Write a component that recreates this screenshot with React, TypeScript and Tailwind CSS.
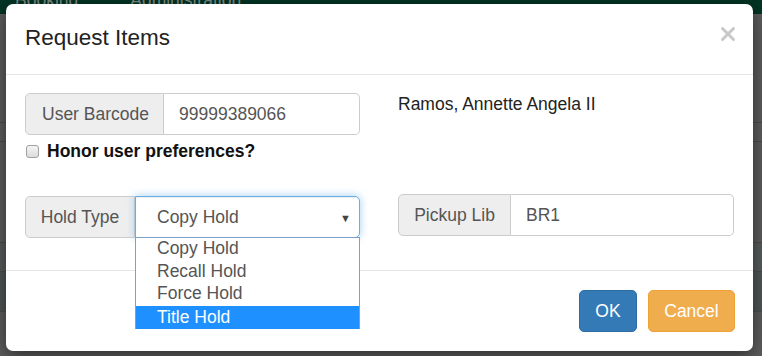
import { X } from 'lucide-react'

const font = { fontFamily: '"Liberation Sans", Arial, sans-serif' }

const holdTypes = ['Copy Hold', 'Recall Hold', 'Force Hold', 'Title Hold']

export default function App() {
  return (
    <div className="relative w-[762px] h-[356px] overflow-hidden bg-[#5d5d5d]" style={font}>
      {/* page behind the backdrop */}
      <div className="h-[27px] bg-[#023424] flex items-start gap-[52px] pl-[15px] text-[17.5px] text-[#7f8c86] -mt-[13px]">
        <span>Booking</span>
        <span>Administration</span>
      </div>
      <div className="h-[108px]" />
      <div className="h-[20px] border-y border-[#4c4c4c]" />
      <div className="h-[100px]" />
      <div className="h-[30px] border-y border-[#4c4c4c] bg-[#565b5b]" />
      <div className="h-[40px] border-b border-[#4c4c4c] bg-[#4f5656]" />

      {/* modal */}
      <div className="absolute left-[6px] top-[4px] w-[747px] h-[347px] bg-white rounded-[7px] shadow-[0_5px_18px_rgba(0,0,0,0.5)] flex flex-col text-[17.5px] text-[#333]">
        <div className="h-[71px] border-b border-[#e5e5e5] flex items-center justify-between pl-[19px] pr-[14px] shrink-0">
          <h4 className="text-[22.5px] leading-[32px] text-[#222] -mt-[2px]">Request Items</h4>
          <X className="w-[22px] h-[22px] text-[#c8c8c8] -mt-[11px]" strokeWidth={3.2} />
        </div>

        <div className="h-[196px] border-b border-[#e5e5e5] shrink-0 flex px-[19px] pt-[18px] gap-[38px]">
          {/* left column */}
          <div className="w-[335px] flex flex-col">
            <div className="flex h-[42px]">
              <span className="w-[139px] flex items-center justify-center pl-[2px] bg-[#eee] border border-[#ccc] rounded-l-[5px] text-[#555]">
                User Barcode
              </span>
              <span className="flex-1 flex items-center pl-[15px] border border-l-0 border-[#ccc] rounded-r-[5px] text-[#555]">
                99999389066
              </span>
            </div>
            <label className="flex items-center gap-[8px] mt-[5px] h-[22px] pl-[1px]">
              <span className="w-[13px] h-[13px] rounded-[3px] border border-[#a0a0a0] bg-gradient-to-b from-[#f4f4f4] to-[#dcdcdc]" />
              <span className="font-bold text-[#111]">Honor user preferences?</span>
            </label>
            <div className="relative flex h-[42px] mt-[34px]">
              <span className="w-[110px] flex items-center justify-center bg-[#eee] border border-[#ccc] rounded-l-[5px] text-[#555]">
                Hold Type
              </span>
              <span className="flex-1 flex items-center justify-between pl-[21px] pr-[8px] border border-[#66afe9] rounded-r-[5px] text-[#555] shadow-[inset_0_1px_1px_rgba(0,0,0,0.075),0_0_8px_rgba(102,175,233,0.6)]">
                Copy Hold
                <span className="text-[11px] text-[#444] mt-[2px]">▼</span>
              </span>
              <ul className="absolute left-[110px] top-[41px] w-[225px] bg-white border border-[#7f9fcf] border-b-0 text-[#555]">
                {holdTypes.map((h, i) => (
                  <li
                    key={h}
                    className={
                      i === 3
                        ? 'h-[23px] leading-[22px] pl-[21px] bg-[#1e90ff] text-white'
                        : 'h-[22.5px] leading-[20px] pl-[21px]'
                    }
                  >
                    {h}
                  </li>
                ))}
              </ul>
            </div>
          </div>

          {/* right column */}
          <div className="w-[336px] flex flex-col">
            <div className="h-[22px] leading-[22px] text-[#222]">Ramos, Annette Angela II</div>
            <div className="flex h-[42px] mt-[79px]">
              <span className="w-[113px] flex items-center justify-center bg-[#eee] border border-[#ccc] rounded-l-[5px] text-[#555]">
                Pickup Lib
              </span>
              <span className="flex-1 flex items-center pl-[15px] border border-l-0 border-[#ccc] rounded-r-[5px] text-[#555]">
                BR1
              </span>
            </div>
          </div>
        </div>

        <div className="flex-1 flex items-start justify-end gap-[11px] pt-[19px] pr-[18px]">
          <button className="h-[42px] w-[58px] rounded-[5px] bg-[#337ab7] border border-[#2e6da4] text-white">OK</button>
          <button className="h-[42px] w-[87px] rounded-[5px] bg-[#f0ad4e] border border-[#eea236] text-white">Cancel</button>
        </div>
      </div>
    </div>
  )
}
